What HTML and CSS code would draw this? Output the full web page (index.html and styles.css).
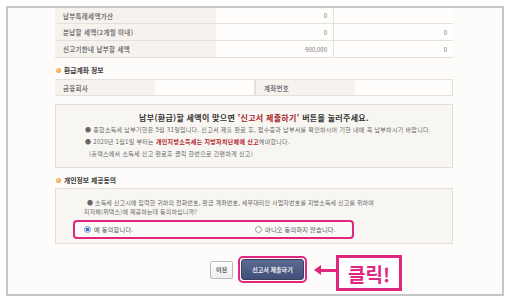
FILE: index.html
```html
<!DOCTYPE html>
<html lang="ko">
<head>
    <meta charset="UTF-8">
    <meta name="viewport" content="width=device-width, initial-scale=1.0">
    <title>신고서 제출</title>
    <link rel="stylesheet" href="styles.css">
</head>
<body>
    <div class="frame">
        <div class="content">
            <div class="tbl tax">
                <div class="lbl">납부특례세액가산</div>
                <div class="val">0</div>
                <div class="val last"></div>

                <div class="lbl">분납할 세액(2개월 이내)</div>
                <div class="val">0</div>
                <div class="val last">0</div>

                <div class="lbl">신고기한내 납부할 세액</div>
                <div class="val">-900,000</div>
                <div class="val last">0</div>
            </div>

            <div class="sect"><span class="dot"></span>환급계좌 정보</div>
            <div class="tbl acct">
                <div class="lbl">금융회사</div>
                <div class="val"></div>
                <div class="lbl mid">계좌번호</div>
                <div class="val"></div>
            </div>

            <div class="notice">
                <p class="big">납부(환급)할 세액이 맞으면 <em>'신고서 제출하기'</em> 버튼을 눌러주세요.</p>
                <p class="item">● 종합소득세 납부기한은 5월 31일입니다. 신고서 제출 완료 후, 접수증과 납부서를 확인하시어 기한 내에 꼭 납부하시기 바랍니다.</p>
                <p class="item">● 2020년 1월1일 부터는 <b>개인지방소득세는 지방자치단체에 신고</b>해야합니다.</p>
                <p class="sub">(홈택스에서 소득세 신고 완료후 클릭 한번으로 간편하게 신고)</p>
            </div>

            <div class="sect"><span class="dot"></span>개인정보 제공동의</div>
            <div class="agree">
                <p class="q">● 소득세 신고시에 입력한 귀하의 전화번호, 환급 계좌번호, 세무대리인 사업자번호를 지방소득세 신고를 위하여<br>지자체(위택스)에 제공하는데 동의하십니까?</p>
                <div class="choice">
                    <label class="opt"><span class="radio on"></span>예 동의합니다.</label>
                    <label class="opt no"><span class="radio"></span>아니오 동의하지 않습니다.</label>
                </div>
            </div>

            <div class="btns">
                <button class="btn prev">이전</button>
                <span class="ring"><button class="btn submit">신고서 제출하기</button></span>
                <span class="arrow"></span>
                <span class="click">클릭!</span>
            </div>
        </div>
    </div>
</body>
</html>
```

FILE: styles.css
```css
html, body
{
    margin: 0;
    padding: 0;
    background: #ffffff;
    font-family: "Noto Sans CJK KR", "Noto Sans", sans-serif;
}

.frame
{
    box-sizing: border-box;
    margin: 6px 0 0 6px;
    width: 498px;
    height: 290px;
    border: 2px solid #c6c6c6;
    background: #fdfcfa;
    overflow: hidden;
}

.content
{
    margin-left: 47px;
    width: 398px;
}

.tbl
{
    display: grid;
    font-size: 6.5px;
    color: #666;
}

.tbl > div
{
    border-bottom: 1px solid #e4e0da;
    display: flex;
    align-items: center;
    box-sizing: border-box;
}

.tax
{
    grid-template-columns: 161px 118px 119px;
    grid-template-rows: 16px 17px 17px;
}

.lbl
{
    background: #f6f3ef;
    padding-left: 8px;
    font-weight: bold;
    color: #777;
    letter-spacing: 0.3px;
}

.val
{
    justify-content: flex-end;
    padding-right: 6px;
    color: #777;
    font-size: 6px;
    background: #fffefd;
    border-right: 1px solid #e4e0da;
}

.val.last
{
    border-right: none;
}

.acct
{
    margin-top: 4px;
    border-top: 1px solid #e4e0da;
    grid-template-columns: 100px 100px 100px 98px;
    grid-template-rows: 16px;
}

.acct .mid
{
    border-left: 1px solid #e4e0da;
}

.sect
{
    margin-top: 7px;
    height: 10px;
    display: flex;
    align-items: center;
    gap: 3px;
    font-size: 6.8px;
    font-weight: bold;
    color: #3a3a3a;
}

.dot
{
    width: 5px;
    height: 5px;
    border-radius: 50%;
    background: radial-gradient(circle at 40% 40%, #fbd08a, #ec8a1c);
    margin-left: 1px;
}

.notice
{
    margin-top: 8px;
    height: 64px;
    box-sizing: border-box;
    border: 1px solid #e2ded8;
    background: #f8f6f2;
    padding-top: 7px;
}

.notice p
{
    margin: 0;
}

.big
{
    text-align: center;
    font-size: 8px;
    font-weight: bold;
    line-height: 12px;
    color: #333;
    letter-spacing: 0.3px;
}

.big em
{
    font-style: normal;
    color: #a8262c;
}

.item
{
    font-size: 6px;
    line-height: 12px;
    color: #666;
    padding-left: 29px;
    letter-spacing: 0.3px;
}

.item:first-of-type
{
    margin-top: 1px;
}

.item b
{
    color: #b0252b;
}

.sub
{
    font-size: 6px;
    line-height: 12px;
    color: #666;
    padding-left: 33px;
    letter-spacing: 0.3px;
}

.agree
{
    margin-top: 3px;
    height: 56px;
    box-sizing: border-box;
    border: 1px solid #e2ded8;
    background: #f8f6f2;
    padding-top: 9px;
}

.q
{
    margin: 0 0 0 28px;
    font-size: 6px;
    line-height: 9px;
    color: #666;
    text-indent: 3px;
    letter-spacing: 0.15px;
}

.choice
{
    margin: 4px 0 0 17px;
    width: 281px;
    height: 19px;
    box-sizing: border-box;
    border: 2px solid #e0277f;
    border-radius: 4px;
    background: #fbfaf8;
    display: flex;
    align-items: center;
    padding-left: 9px;
}

.opt
{
    display: flex;
    align-items: center;
    gap: 3px;
    font-size: 6.2px;
    color: #555;
    width: 171px;
    letter-spacing: 0.2px;
}

.opt.no
{
    width: auto;
}

.radio
{
    width: 5px;
    height: 5px;
    border-radius: 50%;
    border: 1px solid #9a9a9a;
    background: #fff;
}

.radio.on
{
    border-color: #7d9bd0;
    background: radial-gradient(circle, #3f6fc4 45%, #dbe5f5 55%);
}

.btns
{
    position: relative;
    margin-top: 11px;
    height: 29px;
    display: flex;
    align-items: center;
    padding-left: 155px;
    gap: 5px;
}

.btn
{
    font-family: inherit;
    font-size: 6px;
    font-weight: bold;
    padding: 0;
    cursor: pointer;
}

.prev
{
    width: 23px;
    height: 18px;
    border: 1px solid #b9b9b9;
    border-radius: 2px;
    background: linear-gradient(#ffffff, #eeeeee);
    color: #555;
}

.ring
{
    display: flex;
    padding: 1px;
    border: 2px solid #e0277f;
    border-radius: 5px;
}

.submit
{
    width: 63px;
    height: 21px;
    border: 1px solid #37415e;
    border-radius: 3px;
    background: linear-gradient(#5a6a92, #41507a);
    color: #f2f2f2;
}

.arrow
{
    position: absolute;
    left: 263px;
    top: 14px;
    width: 18px;
    height: 3px;
    background: #e0277f;
}

.arrow::before
{
    content: "";
    position: absolute;
    left: -4px;
    top: -4px;
    border-right: 7px solid #e0277f;
    border-top: 5.5px solid transparent;
    border-bottom: 5.5px solid transparent;
}

.click
{
    position: absolute;
    left: 281px;
    top: 0;
    width: 66px;
    height: 36px;
    box-sizing: border-box;
    border: 3px solid #e0277f;
    background: #fff;
    display: flex;
    align-items: center;
    justify-content: center;
    font-size: 19px;
    font-weight: bold;
    color: #e0277f;
}
```
